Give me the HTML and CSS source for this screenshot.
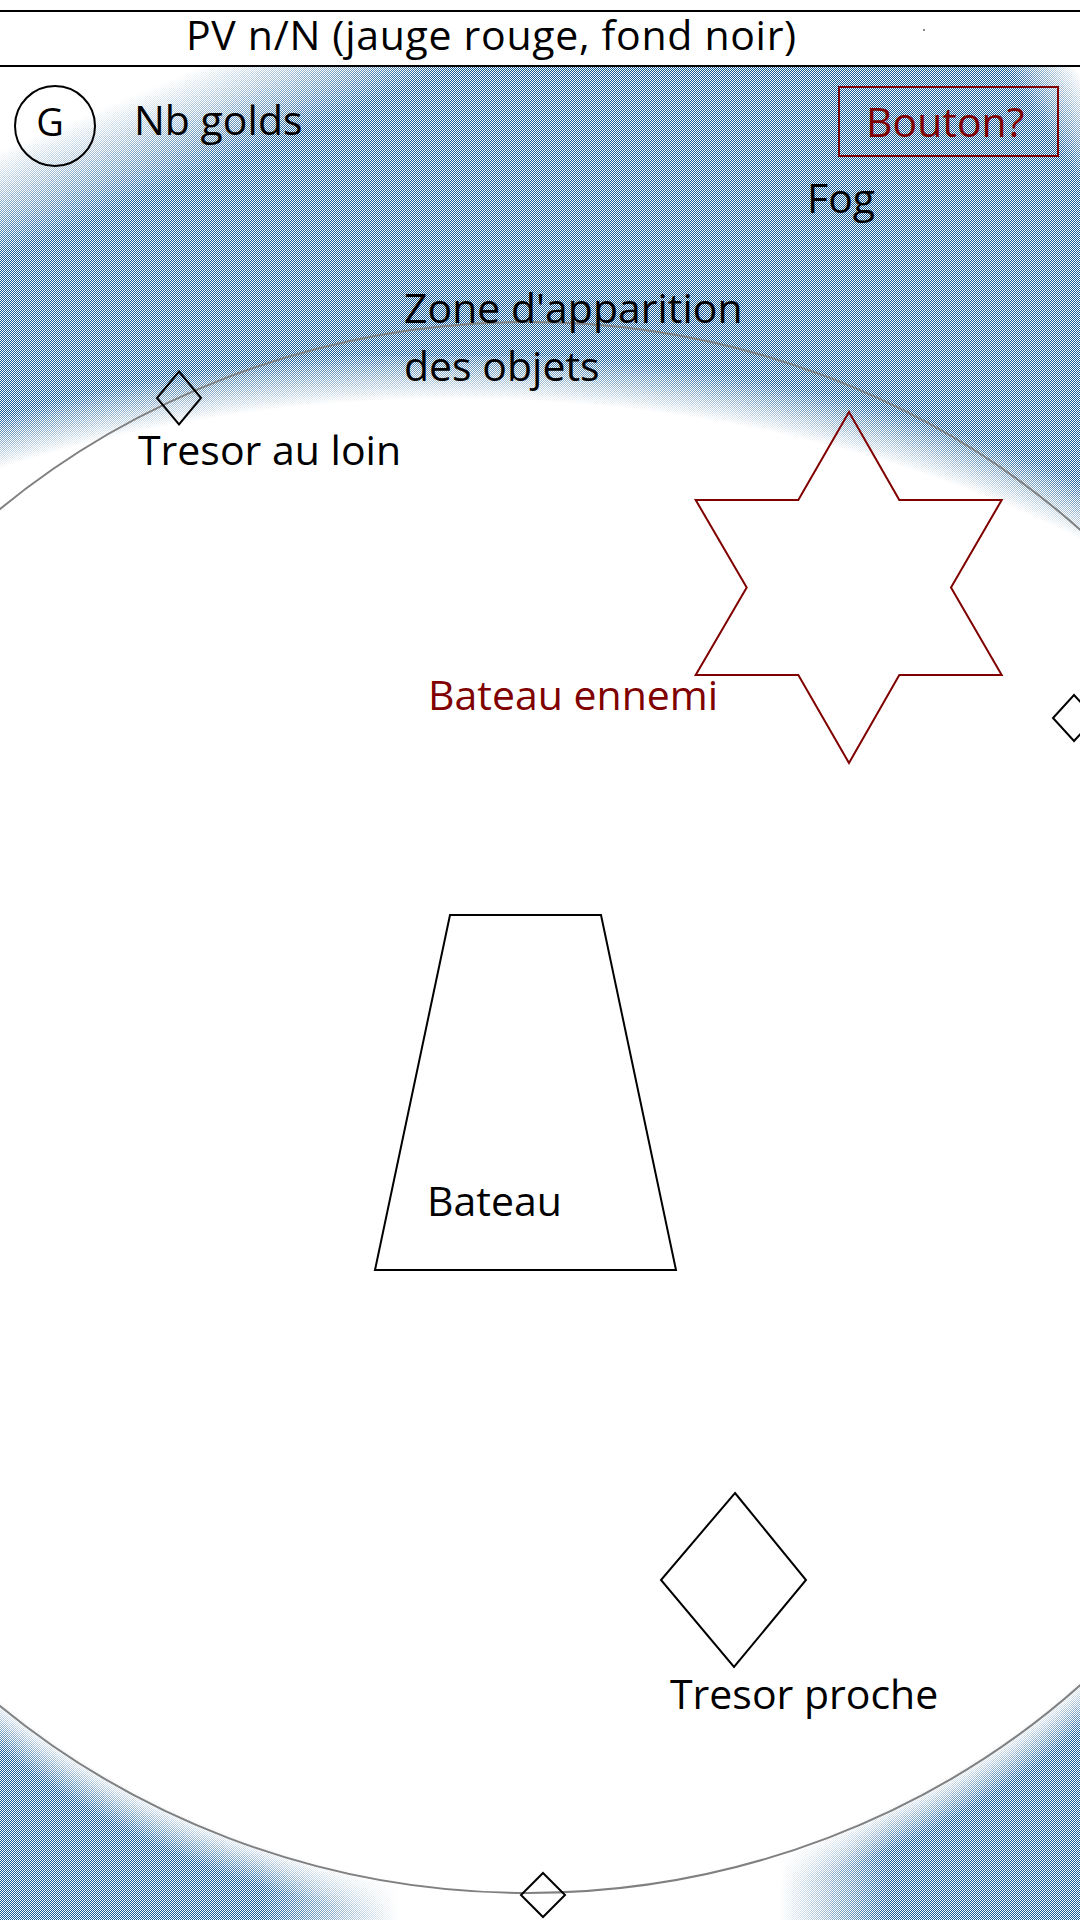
FILE: index.html
```html
<!DOCTYPE html>
<html lang="fr">
<head>
<meta charset="utf-8">
<title>Maquette jeu - bateau</title>
<link rel="stylesheet" href="styles.css">
</head>
<body>
<svg class="world" viewBox="0 0 1080 1920" width="1080" height="1920" aria-hidden="true">
  <defs>
    <pattern id="dither" width="2" height="2" patternUnits="userSpaceOnUse">
      <rect x="1" y="0" width="1" height="1" fill="#135a98" shape-rendering="crispEdges"/>
      <rect x="0" y="1" width="1" height="1" fill="#135a98" shape-rendering="crispEdges"/>
    </pattern>

    <linearGradient id="gTL" gradientUnits="userSpaceOnUse" x1="145.6" y1="89.4" x2="184.4" y2="181.6">
      <stop offset="0" stop-color="#fff" stop-opacity="0"/>
      <stop offset="1" stop-color="#fff" stop-opacity="1"/>
    </linearGradient>
    <linearGradient id="gTR" gradientUnits="userSpaceOnUse" x1="1085" y1="82" x2="1035" y2="114">
      <stop offset="0" stop-color="#fff" stop-opacity="0"/>
      <stop offset="1" stop-color="#fff" stop-opacity="1"/>
    </linearGradient>
    <radialGradient id="gTopCut" cx="0.5" cy="0.5" r="0.5">
      <stop offset="0.935" stop-color="#fff" stop-opacity="0"/>
      <stop offset="1" stop-color="#fff" stop-opacity="1"/>
    </radialGradient>
    <radialGradient id="gBottomCut" cx="0.5" cy="0.5" r="0.5">
      <stop offset="0.952" stop-color="#fff" stop-opacity="0"/>
      <stop offset="1" stop-color="#fff" stop-opacity="1"/>
    </radialGradient>
    <linearGradient id="gMid" gradientUnits="userSpaceOnUse" x1="0" y1="0" x2="1080" y2="0">
      <stop offset="0" stop-color="#fff" stop-opacity="1"/>
      <stop offset="0.241" stop-color="#fff" stop-opacity="1"/>
      <stop offset="0.370" stop-color="#fff" stop-opacity="0"/>
      <stop offset="0.722" stop-color="#fff" stop-opacity="0"/>
      <stop offset="0.824" stop-color="#fff" stop-opacity="1"/>
      <stop offset="1" stop-color="#fff" stop-opacity="1"/>
    </linearGradient>

    <mask id="mTL" class="alpha-mask" maskUnits="userSpaceOnUse" x="0" y="0" width="1080" height="1920">
      <rect x="0" y="0" width="1080" height="1920" fill="url(#gTL)"/>
    </mask>
    <mask id="mTR" class="alpha-mask" maskUnits="userSpaceOnUse" x="0" y="0" width="1080" height="1920">
      <rect x="0" y="0" width="1080" height="1920" fill="url(#gTR)"/>
    </mask>
    <mask id="mTopCut" class="alpha-mask" maskUnits="userSpaceOnUse" x="0" y="0" width="1080" height="1920">
      <rect x="0" y="0" width="1080" height="356" fill="#fff"/>
      <rect x="-666" y="350" width="2240" height="1514" fill="url(#gTopCut)"/>
    </mask>
    <mask id="mBottomCut" class="alpha-mask" maskUnits="userSpaceOnUse" x="0" y="0" width="1080" height="1920">
      <rect x="-323.7" y="286.6" width="1703.4" height="1641.8" fill="url(#gBottomCut)"/>
    </mask>
    <mask id="mMid" class="alpha-mask" maskUnits="userSpaceOnUse" x="0" y="0" width="1080" height="1920">
      <rect x="0" y="0" width="1080" height="1920" fill="url(#gMid)"/>
    </mask>
  </defs>

  <g mask="url(#mTL)">
    <g mask="url(#mTR)">
      <rect class="fog" x="0" y="67" width="1080" height="933" fill="url(#dither)" mask="url(#mTopCut)"/>
    </g>
  </g>
  <g mask="url(#mMid)">
    <rect class="fog" x="0" y="1500" width="1080" height="420" fill="url(#dither)" mask="url(#mBottomCut)"/>
  </g>

  <ellipse class="spawn-zone" cx="528" cy="1107.5" rx="815" ry="785.5"/>

  <polygon class="enemy-ship" points="849,412 899.3,500 1001.7,500 951,587.5 1001.7,675 899.3,675 849,763 798.3,675 695.7,675 746.7,587.5 695.7,500 798.3,500"/>

  <polygon class="ship" points="450,915 601,915 676,1270 375,1270"/>

  <polygon class="treasure" points="179,371.5 201,398 179,424.5 157,398"/>
  <polygon class="treasure" points="1074,695 1095,718 1074,741 1053,718"/>
  <polygon class="treasure" points="543,1873 565,1895 543,1917 521,1895"/>
  <polygon class="treasure" points="735,1493 806,1580 734,1667 661,1580"/>
</svg>

<header class="hp-bar">
  PV n/N (jauge rouge, fond noir)
  <span class="speck"></span>
</header>

<div class="hud">
  <div class="gold-icon">G</div>
  <div class="gold-count">Nb golds</div>
  <div class="help-btn">Bouton?</div>
</div>

<span class="label label-fog">Fog</span>
<span class="label label-zone">Zone d'apparition<br>des objets</span>
<span class="label label-far">Tresor au loin</span>
<span class="label label-enemy">Bateau ennemi</span>
<span class="label label-ship">Bateau</span>
<span class="label label-near">Tresor proche</span>
</body>
</html>
```

FILE: styles.css
```css
html, body {
  margin: 0;
  padding: 0;
}

body {
  position: relative;
  width: 1080px;
  height: 1920px;
  overflow: hidden;
  background: #ffffff;
  color: #000000;
  font-family: "Open Sans", "Noto Sans", "DejaVu Sans", sans-serif;
  font-size: 41px;
}

.world {
  position: absolute;
  left: 0;
  top: 0;
  display: block;
  z-index: 0;
}

.alpha-mask {
  mask-type: alpha;
}

.spawn-zone {
  fill: none;
  stroke: #808080;
  stroke-width: 2;
}

.enemy-ship {
  fill: none;
  stroke: #800000;
  stroke-width: 2;
  stroke-linejoin: miter;
}

.ship,
.treasure {
  fill: none;
  stroke: #000000;
  stroke-width: 2;
  stroke-linejoin: miter;
}

.hp-bar {
  position: relative;
  z-index: 1;
  margin-top: 10px;
  height: 45px;
  padding: 0 0 8px 186px;
  border-top: 2px solid #000000;
  border-bottom: 2px solid #000000;
  background: #ffffff;
  line-height: 45px;
  letter-spacing: 0.7px;
  white-space: nowrap;
}

.speck {
  position: absolute;
  left: 923px;
  top: 17px;
  width: 2px;
  height: 2px;
  background: #8a8a8a;
}

.hud {
  position: relative;
  z-index: 1;
  display: flex;
  align-items: flex-start;
  padding: 18px 21px 0 14px;
}

.gold-icon {
  box-sizing: border-box;
  width: 82px;
  height: 82px;
  border: 2px solid #000000;
  border-radius: 50%;
  display: flex;
  align-items: center;
  justify-content: center;
  padding: 0 10px 10px 0;
  font-size: 38px;
  line-height: 1;
}

.gold-count {
  margin: 9px 0 0 38px;
  line-height: 50px;
  white-space: nowrap;
}

.help-btn {
  box-sizing: border-box;
  margin: 1px 0 0 auto;
  width: 221px;
  height: 71px;
  padding: 8px 0 0 26px;
  border: 2px solid #800000;
  color: #800000;
  line-height: 50px;
  white-space: nowrap;
}

.label {
  position: absolute;
  z-index: 1;
  line-height: 50px;
  white-space: nowrap;
}

.label-fog {
  left: 807px;
  top: 172px;
}

.label-zone {
  left: 404px;
  top: 278px;
  line-height: 58px;
}

.label-far {
  left: 138px;
  top: 424px;
}

.label-enemy {
  left: 428px;
  top: 669px;
  color: #800000;
}

.label-ship {
  left: 427px;
  top: 1175px;
}

.label-near {
  left: 670px;
  top: 1668px;
}
```
